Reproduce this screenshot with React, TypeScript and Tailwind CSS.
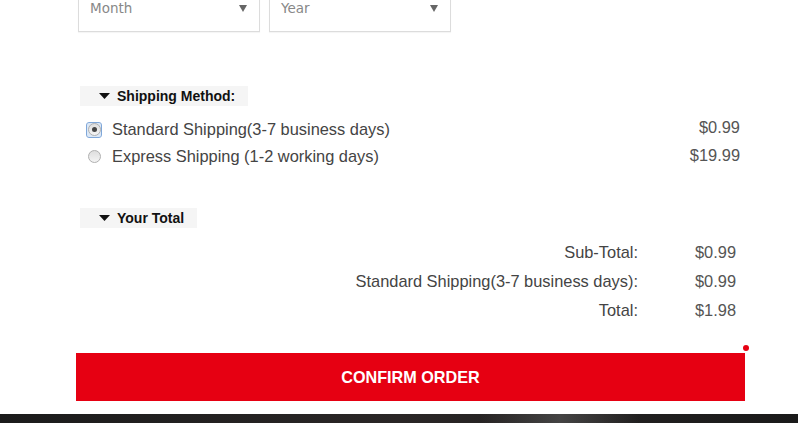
import React from "react";

const Radio = ({ checked }: { checked?: boolean }) => (
  <span
    className={`relative flex h-[14px] w-[14px] items-center justify-center ${
      checked ? "outline outline-1 outline-[#7fa7d9] rounded-[2px] bg-[#dce8f6]" : ""
    }`}
  >
    <span className="flex h-[13px] w-[13px] items-center justify-center rounded-full border border-[#b0b0b0] bg-gradient-to-b from-[#dedede] to-[#f4f4f4]">
      {checked && <span className="h-[5px] w-[5px] rounded-full bg-[#444]" />}
    </span>
  </span>
);

const SectionTitle = ({ title, width }: { title: string; width: string }) => (
  <div className={`ml-[80px] flex h-[20px] items-center gap-[7px] bg-[#f5f5f5] pl-[19px] ${width}`}>
    <svg width="11" height="6" viewBox="0 0 11 6">
      <path d="M0 0h11L5.5 6z" fill="#111" />
    </svg>
    <span className="text-[14px] font-bold text-[#111]">{title}</span>
  </div>
);

const Select = ({ label }: { label: string }) => (
  <div className="flex h-[44px] w-[182px] items-center justify-between border border-[#dcdcdc] pb-[4px] pl-[11px] pr-[12px] shadow-[0_1px_1px_rgba(0,0,0,0.04)]">
    <span className="font-['DejaVu_Sans',Verdana,sans-serif] text-[13.5px] text-[#888]">{label}</span>
    <svg width="8" height="8" viewBox="0 0 8 8">
      <path d="M0 1h8L4 8z" fill="#666" />
    </svg>
  </div>
);

export default function App() {
  const totals = [
    { label: "Sub-Total:", value: "$0.99" },
    { label: "Standard Shipping(3-7 business days):", value: "$0.99" },
    { label: "Total:", value: "$1.98" },
  ];

  return (
    <div className="relative h-[423px] w-[800px] overflow-hidden bg-white font-['Liberation_Sans',Arial,sans-serif] text-[#444]">
      {/* Expiry selects */}
      <div className="-mt-[12px] flex gap-[9px] pl-[78px]">
        <Select label="Month" />
        <Select label="Year" />
      </div>

      {/* Shipping method */}
      <div className="mt-[54px]">
        <SectionTitle title="Shipping Method:" width="w-[168px]" />
      </div>
      <div className="mt-[10px] w-[740px] pl-[87px] text-[16.4px]">
        <div className="flex h-[27px] items-center">
          <Radio checked />
          <span className="ml-[11px] flex-1">Standard Shipping(3-7 business days)</span>
          <span className="-mt-[4px] text-[#555]">$0.99</span>
        </div>
        <div className="flex h-[27px] items-center">
          <Radio />
          <span className="ml-[11px] flex-1">Express Shipping (1-2 working days)</span>
          <span className="-mt-[3px] text-[#555]">$19.99</span>
        </div>
      </div>

      {/* Totals */}
      <div className="mt-[38px]">
        <SectionTitle title="Your Total" width="w-[117px]" />
      </div>
      <div className="mt-[9.5px] text-[16.4px]">
        {totals.map((t) => (
          <div key={t.label} className="flex h-[29px] items-center">
            <span className="w-[638px] text-right">{t.label}</span>
            <span className="ml-[57px] text-[#555]">{t.value}</span>
          </div>
        ))}
      </div>

      {/* Confirm */}
      <div className="relative ml-[76px] mt-[28.5px] w-[669px]">
        <button className="flex h-[48px] w-full items-center justify-center bg-[#e60012] text-[16.2px] font-bold text-white">
          CONFIRM ORDER
        </button>
        <span className="absolute -right-[4px] -top-[8px] h-[6px] w-[6px] rounded-full bg-[#e60012]" />
      </div>

      <div className="mt-[13px] h-[9px] w-[798px] bg-gradient-to-r from-[#1b1b1b] via-[#2a2626] to-[#1a1a1a]">
        <div className="ml-[480px] h-full w-[160px] bg-gradient-to-r from-transparent via-[#5a5a5a]/60 to-transparent" />
      </div>
    </div>
  );
}
